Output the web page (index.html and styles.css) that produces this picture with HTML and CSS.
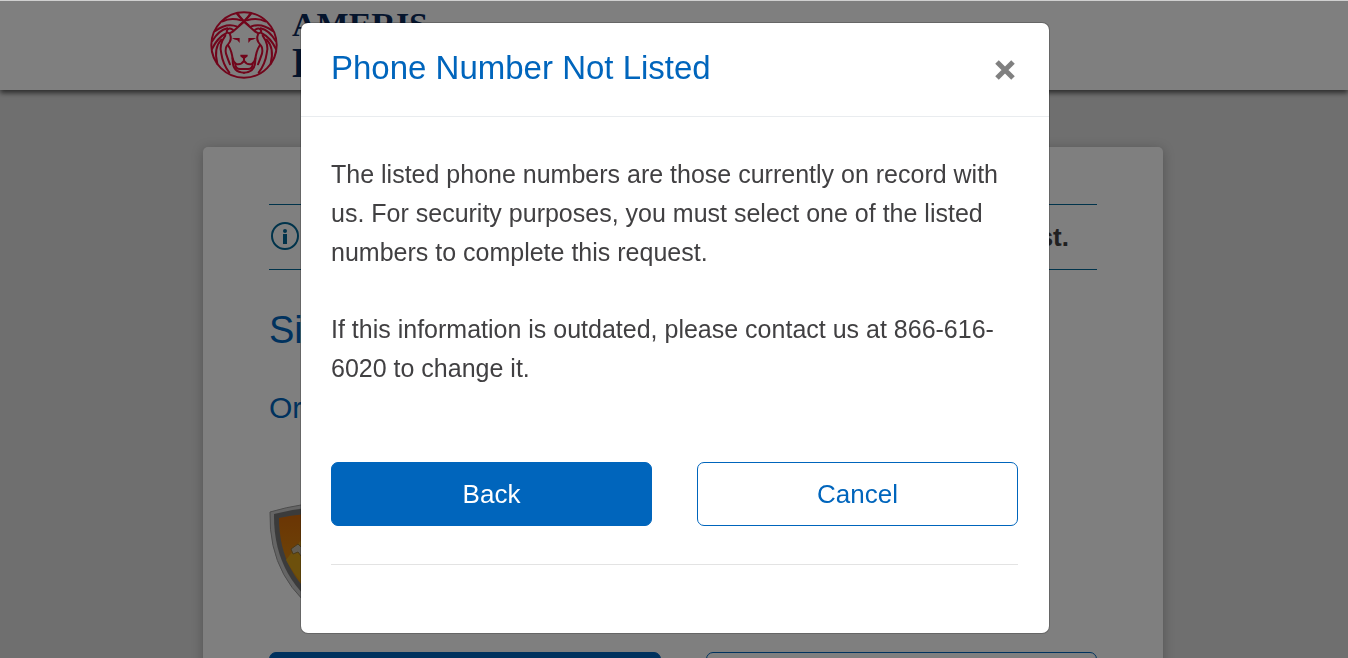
FILE: index.html
```html
<!DOCTYPE html>
<html lang="en">
<head>
    <meta charset="UTF-8">
    <meta name="viewport" content="width=device-width, initial-scale=1.0">
    <title>Phone Number Not Listed</title>
    <link rel="stylesheet" href="styles.css">
</head>
<body>
    <header class="site-header">
        <div class="brand">
            <svg class="brand-lion" viewBox="30 18 204 204" aria-hidden="true">
                <g fill="none" stroke="#e20b37" stroke-width="6" stroke-linecap="round" stroke-linejoin="round">
                    <circle cx="132" cy="120" r="98"/>
                    <g id="half">
                        <path d="M132 50 L98 80 Q84 90 80 78 Q84 66 98 74"/>
                        <path d="M150 27 Q140 43 118 61"/>
                        <path d="M110 25 Q120 38 132 50"/>
                        <path d="M124 46 Q92 36 68 49"/>
                        <path d="M112 65 Q80 52 46 78"/>
                        <path d="M82 70 Q56 76 37 108"/>
                        <path d="M80 84 Q52 98 36 132"/>
                        <path d="M90 88 Q97 104 84 118 Q74 128 78 146 Q84 164 90 178"/>
                        <path d="M76 92 Q56 120 64 146 Q68 176 88 203"/>
                        <path d="M64 104 Q40 130 52 176"/>
                        <path d="M84 120 Q97 140 98 166 Q98 203 132 203"/>
                        <path d="M98 160 Q100 172 109 177 Q124 180 132 167"/>
                        <path d="M106 177 Q106 192 120 192 H132"/>
                    </g>
                    <use href="#half" transform="matrix(-1 0 0 1 264 0)"/>
                    <path d="M132 154 V167"/>
                </g>
                <g fill="#e20b37">
                    <path d="M96 99 H119 V114 L112 106 Q103 105 96 99 Z"/>
                    <path d="M168 99 H145 V114 L152 106 Q161 105 168 99 Z"/>
                    <path d="M121 149 H143 V154 L136 160 H128 L121 154 Z"/>
                </g>
            </svg>
            <div class="brand-name">
                <span class="brand-top">AMERIS</span>
                <span class="brand-bottom">B</span>
            </div>
        </div>
    </header>

    <main class="card">
        <div class="notice">
            <svg class="info-icon" viewBox="0 0 30 30" aria-hidden="true">
                <circle cx="15" cy="14" r="13" fill="none" stroke="#006796" stroke-width="2"/>
                <circle cx="15" cy="9" r="2" fill="#006796"/>
                <path d="M13 12 H17 V22 H13 Z" fill="#006796"/>
            </svg>
            <strong>st.</strong>
        </div>
        <h1>Si</h1>
        <h2>Or</h2>
        <svg class="shield" viewBox="0 0 120 120" aria-hidden="true">
            <defs>
                <linearGradient id="gold" x1="0" y1="0" x2="0" y2="1">
                    <stop offset="0" stop-color="#d66a0a"/>
                    <stop offset="1" stop-color="#e0a010"/>
                </linearGradient>
            </defs>
            <path d="M1 9 Q18 4 32 2 Q48 0 60 0 Q90 1 119 9 Q121 80 60 117 Q-1 80 1 9 Z" fill="#cacaca" stroke="#999" stroke-width="1"/>
            <path d="M5 11 Q30 4 60 4 Q90 4 115 11 Q116 77 60 112 Q4 77 5 11 Z" fill="#777"/>
            <path d="M10 15 Q34 10 60 10 Q86 10 110 15 Q110 74 60 105 Q10 74 10 15 Z" fill="url(#gold)"/>
            <path d="M17 57 L33 36 H87 L103 57 L60 104 Q29 80 17 57 Z" fill="#daa018"/>
            <path d="M22 46 L29 41 L45 56 L39 62 L29 49 L24 51 Z" fill="#c3b9a5" stroke="#947331" stroke-width="1"/>
        </svg>
        <div class="actions page-actions">
            <button type="button" class="btn btn-primary" aria-label="Continue"></button>
            <button type="button" class="btn btn-outline" aria-label="Go back"></button>
        </div>
    </main>

    <div class="overlay">
        <div class="modal" role="dialog" aria-modal="true" aria-labelledby="modalTitle">
            <div class="modal-header">
                <h3 id="modalTitle">Phone Number Not Listed</h3>
                <button type="button" class="close-btn" aria-label="Close">
                    <svg viewBox="0 0 20 20" aria-hidden="true">
                        <path d="M2 2 L18 18 M18 2 L2 18" stroke="#808080" stroke-width="5"/>
                    </svg>
                </button>
            </div>
            <div class="modal-body">
                <p>The listed phone numbers are those currently on record with us. For security purposes, you must select one of the listed numbers to complete this request.</p>
                <p>If this information is outdated, please contact us at 866-616-6020 to change it.</p>
                <div class="actions">
                    <button type="button" class="btn btn-primary">Back</button>
                    <button type="button" class="btn btn-outline">Cancel</button>
                </div>
                <hr>
            </div>
        </div>
    </div>
</body>
</html>
```
FILE: styles.css
```css
* {
    margin: 0;
    padding: 0;
    box-sizing: border-box;
}

body {
    font-family: "Liberation Sans", Arial, sans-serif;
    font-size: 25px;
    color: #414042;
    background: #dedede;
    height: 100vh;
    overflow: hidden;
    padding-left: 18px;
}

.site-header {
    height: 90px;
    margin-left: -18px;
    padding-left: 18px;
    background: #fff;
    box-shadow: 0 3px 5px rgba(0, 0, 0, 0.6);
}

.brand {
    display: flex;
    gap: 14px;
    max-width: 960px;
    margin: 0 auto;
    padding: 11px 7px;
}

.brand-lion {
    width: 68px;
    height: 68px;
}

.brand-name {
    display: flex;
    flex-direction: column;
    font-family: "Liberation Serif", "Times New Roman", serif;
    font-weight: bold;
    color: #0b2a5b;
}

.brand-top {
    font-size: 34px;
    line-height: 28px;
}

.brand-bottom {
    font-size: 42px;
    line-height: 48px;
}

.card {
    max-width: 960px;
    margin: 57px auto 0;
    padding: 57px 66px;
    background: #fff;
    border-radius: 5px;
    box-shadow: 0 2px 12px rgba(0, 0, 0, 0.25);
}

.notice {
    display: flex;
    align-items: center;
    justify-content: space-between;
    height: 66px;
    padding: 0 28px 0 1px;
    border-top: 1px solid #006796;
    border-bottom: 1px solid #006796;
}

.notice strong {
    font-size: 26px;
}

.info-icon {
    width: 30px;
    height: 30px;
}

.card h1,
.card h2 {
    font-weight: normal;
    color: #0065bc;
}

.card h1 {
    margin-top: 38px;
    font-size: 38px;
    line-height: 44px;
}

.card h2 {
    margin-top: 38px;
    font-size: 30px;
    line-height: 36px;
}

.shield {
    display: block;
    width: 120px;
    height: 120px;
    margin-top: 77px;
}

.actions {
    display: grid;
    grid-template-columns: 1fr 1fr;
    gap: 45px;
}

.page-actions {
    margin-top: 29px;
}

.btn {
    height: 64px;
    border: 1px solid #0065bc;
    border-radius: 7px;
    font-family: inherit;
    font-size: 26px;
    cursor: pointer;
}

.btn-primary {
    background: #0065bc;
    color: #fff;
}

.btn-outline {
    background: #fff;
    color: #0065bc;
}

.overlay {
    position: fixed;
    inset: 0;
    padding: 22px 18px 0 20px;
    border-top: 1px solid #d0d0d0;
    background: rgba(0, 0, 0, 0.5);
}

.modal {
    max-width: 748px;
    margin: 0 auto;
    background: #fff;
    border-radius: 7px;
    box-shadow: 0 0 0 1px rgba(0, 0, 0, 0.2);
}

.modal-header {
    display: flex;
    align-items: center;
    justify-content: space-between;
    height: 94px;
    padding: 0 34px 0 30px;
    border-bottom: 1px solid #e9ecef;
}

.modal-header h3 {
    font-size: 33px;
    line-height: 40px;
    padding-bottom: 4px;
    font-weight: normal;
    color: #0065bc;
}

.close-btn {
    width: 20px;
    height: 20px;
    border: none;
    background: none;
    cursor: pointer;
}

.close-btn svg {
    display: block;
}

.modal-body {
    padding: 38px 31px 68px 30px;
}

.modal-body p {
    line-height: 39px;
    margin-bottom: 38px;
}

.modal-body .actions {
    margin-top: 74px;
}

.modal-body hr {
    margin-top: 38px;
    border: none;
    border-top: 1px solid #e3e3e3;
}
```
